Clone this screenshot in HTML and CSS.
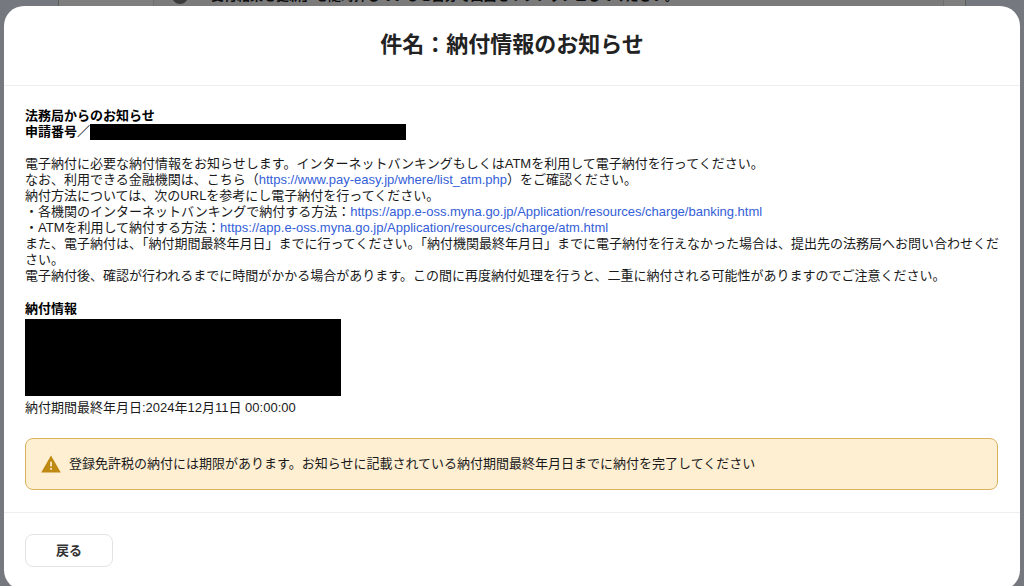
FILE: index.html
```html
<!DOCTYPE html>
<html lang="ja">
<head>
    <meta charset="UTF-8">
    <meta name="viewport" content="width=device-width, initial-scale=1.0">
    <title>納付情報のお知らせ</title>
    <link rel="stylesheet" href="styles.css">
</head>
<body>
    <div class="page">
        <div class="panel">
            <div class="panel-inner">
                <span class="help-icon">?</span>
                <p class="help-text">「受付結果を更新」を随時押していると自分で画面をリフレッシュしてください。</p>
            </div>
        </div>
    </div>

    <div class="overlay">
        <div class="modal" role="dialog" aria-labelledby="modal-title">
            <header class="modal-header">
                <h1 id="modal-title">件名：納付情報のお知らせ</h1>
            </header>

            <div class="modal-body">
                <div class="message">
                    <h2>法務局からのお知らせ<br>申請番号／<span class="mask mask-number"></span></h2>
                    <p>
                        電子納付に必要な納付情報をお知らせします。インターネットバンキングもしくはATMを利用して電子納付を行ってください。<br>
                        なお、利用できる金融機関は、こちら（<a href="https://www.pay-easy.jp/where/list_atm.php">https://www.pay-easy.jp/where/list_atm.php</a>）をご確認ください。<br>
                        納付方法については、次のURLを参考にし電子納付を行ってください。<br>
                        ・各機関のインターネットバンキングで納付する方法：<a href="https://app.e-oss.myna.go.jp/Application/resources/charge/banking.html">https://app.e-oss.myna.go.jp/Application/resources/charge/banking.html</a><br>
                        ・ATMを利用して納付する方法：<a href="https://app.e-oss.myna.go.jp/Application/resources/charge/atm.html">https://app.e-oss.myna.go.jp/Application/resources/charge/atm.html</a><br>
                        また、電子納付は、「納付期間最終年月日」までに行ってください。「納付機関最終年月日」までに電子納付を行えなかった場合は、提出先の法務局へお問い合わせください。<br>
                        電子納付後、確認が行われるまでに時間がかかる場合があります。この間に再度納付処理を行うと、二重に納付される可能性がありますのでご注意ください。
                    </p>
                    <h2>納付情報</h2>
                    <div class="mask mask-payment"></div>
                    <p class="deadline">納付期間最終年月日:2024年12月11日 00:00:00</p>
                </div>

                <div class="alert" role="alert">
                    <svg class="alert-icon" viewBox="0 0 20 18" aria-hidden="true">
                        <path fill="#bf8a13" d="M10 0.5 L19.8 17.5 H0.2 Z"/>
                        <path fill="#feeed2" d="M9.2 6.8h1.7v4.7H9.2zM9.2 13.1h1.7v1.7H9.2z"/>
                    </svg>
                    <p>登録免許税の納付には期限があります。お知らせに記載されている納付期間最終年月日までに納付を完了してください</p>
                </div>
            </div>

            <footer class="modal-footer">
                <button type="button" class="btn-back">戻る</button>
            </footer>
        </div>
    </div>
</body>
</html>
```

FILE: styles.css
```css
* {
    box-sizing: border-box;
}

body {
    margin: 0;
    font-family: "Liberation Sans", "Noto Sans CJK JP", sans-serif;
    font-size: 13px;
    line-height: 16px;
    color: #1a1a1a;
    background-color: #eaf2ff;
}

h1, h2, p {
    margin: 0;
}

/* Página de fondo */
.page {
    height: 100vh;
    overflow: hidden;
    padding: 0 58px;
}

.panel {
    height: 100%;
    padding: 0 21px 0 94px;
    background-color: #fff;
    border: 1px solid #bbb;
    border-width: 0 1px;
}

.panel-inner {
    display: flex;
    gap: 10px;
    height: 100%;
    padding-left: 18px;
    background-color: #f6f6f6;
    border: 1px solid #ddd;
    border-width: 0 1px;
}

.help-icon {
    width: 16px;
    height: 16px;
    margin-top: -12px;
    border-radius: 50%;
    background-color: #777;
    color: #fff;
    text-align: center;
}

.help-text {
    margin-top: -12px;
    font-weight: bold;
}

/* Ventana modal */
.overlay {
    position: fixed;
    inset: 0;
    overflow: hidden;
    padding: 6px 4px 0;
    background-color: rgba(0, 0, 0, 0.5);
}

.modal {
    background-color: #fff;
    border-radius: 20px;
}

.modal-header {
    padding: 23px 20px 24px;
    border-bottom: 1px solid #eee;
}

.modal-header h1 {
    font-size: 22px;
    line-height: 32px;
    text-align: center;
    color: #222;
}

.modal-body {
    padding: 22px 22px 22px 21px;
}

.message {
    margin-right: -4px;
}

.message h2 {
    font-size: 13px;
    color: #000;
}

.message p {
    margin: 16px 0 17px;
}

.message a {
    color: #3460d8;
    text-decoration: none;
}

.mask {
    background-color: #000;
}

.mask-number {
    display: inline-block;
    width: 316px;
    height: 16px;
    vertical-align: top;
}

.mask-payment {
    width: 316px;
    height: 77px;
    margin-top: 2px;
}

.message .deadline {
    margin: 4px 0 22px;
}

.alert {
    display: flex;
    align-items: center;
    gap: 8px;
    padding: 16px 15px;
    background-color: #feeed2;
    border: 1px solid #d8b35e;
    border-radius: 8px;
}

.alert-icon {
    width: 20px;
    height: 18px;
}

.modal-footer {
    padding: 21px 21px 23px;
    border-top: 1px solid #eee;
}

.btn-back {
    padding: 7px 30px;
    font-family: inherit;
    font-size: 13px;
    font-weight: bold;
    line-height: 17px;
    color: #333;
    background-color: #fff;
    border: 1px solid #e3e3e3;
    border-radius: 8px;
    cursor: pointer;
}
```
